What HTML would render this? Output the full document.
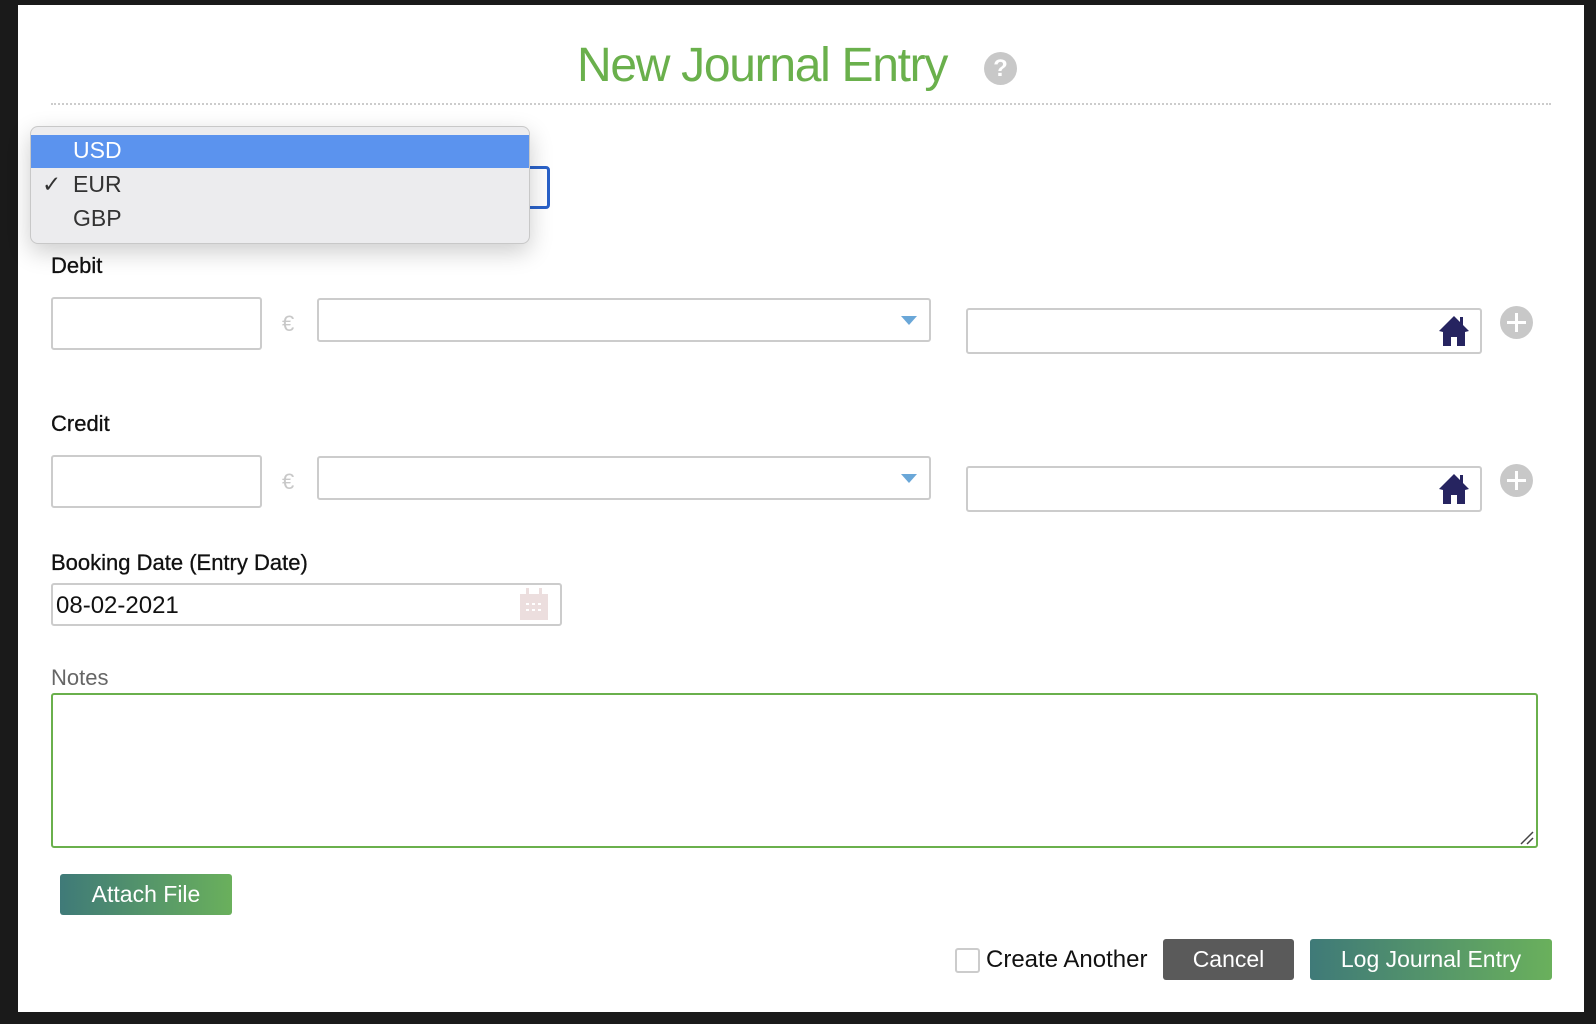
<!DOCTYPE html>
<html><head><meta charset="utf-8"><style>
*{box-sizing:border-box;margin:0;padding:0}
body{width:1596px;height:1024px;background:#1a1a1a;position:relative;overflow:hidden;font-family:"Liberation Sans",sans-serif;color:#111}
.panel{position:absolute;left:18px;top:5px;width:1566px;height:1007px;background:#fff}
.a{position:absolute}
.inp{position:absolute;border:2px solid #ccc;border-radius:3px;background:#fff}
.lbl{position:absolute;font-size:22px;color:#111;-webkit-text-stroke:0.3px #111}
.euro{position:absolute;font-size:22px;color:#c8c8c8}
.arrow{position:absolute;width:0;height:0;border-left:8px solid transparent;border-right:8px solid transparent;border-top:9px solid #6aa7d8}
.plus{position:absolute;width:33px;height:33px;border-radius:50%;background:#c8c8c8}
.plus:before{content:"";position:absolute;left:7px;top:15px;width:19px;height:3px;background:#fff}
.plus:after{content:"";position:absolute;left:15px;top:7px;width:3px;height:19px;background:#fff}
.btn{position:absolute;color:#fff;font-size:23px;text-align:center;border-radius:3px}
</style></head><body>
<div class="panel"></div>
<div class="a" style="left:577px;top:38px;font-size:48px;color:#6ab04c;letter-spacing:-1.3px">New Journal Entry</div>
<div class="a" style="left:984px;top:52px;width:33px;height:33px;border-radius:50%;background:#c8c8c8;color:#fff;font-weight:bold;font-size:24px;text-align:center;line-height:33px">?</div>
<div class="a" style="left:51px;top:103px;width:1500px;border-top:2px dotted #ccc"></div>

<div class="a" style="left:300px;top:166px;width:250px;height:43px;border:3px solid #2a62c9;border-radius:4px"></div>

<div class="lbl" style="left:51px;top:253px">Debit</div>
<div class="inp" style="left:51px;top:297px;width:211px;height:53px"></div>
<div class="euro" style="left:282px;top:311px">€</div>
<div class="inp" style="left:317px;top:298px;width:614px;height:44px"></div>
<div class="arrow" style="left:901px;top:316px"></div>
<div class="inp" style="left:966px;top:308px;width:516px;height:46px"></div>
<svg class="a" style="left:1437px;top:313px" width="34" height="34" viewBox="0 0 34 34"><path d="M17 3 L2 18 L6 19 L6 33 L14 33 L14 24 L20 24 L20 33 L28 33 L28 19 L32 18 L26 12 L26 4 L23 4 L23 9 Z" fill="#262460"/></svg>
<div class="plus" style="left:1500px;top:306px"></div>

<div class="lbl" style="left:51px;top:411px">Credit</div>
<div class="inp" style="left:51px;top:455px;width:211px;height:53px"></div>
<div class="euro" style="left:282px;top:469px">€</div>
<div class="inp" style="left:317px;top:456px;width:614px;height:44px"></div>
<div class="arrow" style="left:901px;top:474px"></div>
<div class="inp" style="left:966px;top:466px;width:516px;height:46px"></div>
<svg class="a" style="left:1437px;top:471px" width="34" height="34" viewBox="0 0 34 34"><path d="M17 3 L2 18 L6 19 L6 33 L14 33 L14 24 L20 24 L20 33 L28 33 L28 19 L32 18 L26 12 L26 4 L23 4 L23 9 Z" fill="#262460"/></svg>
<div class="plus" style="left:1500px;top:464px"></div>

<div class="lbl" style="left:51px;top:550px">Booking Date (Entry Date)</div>
<div class="inp" style="left:51px;top:583px;width:511px;height:43px"></div>
<div class="a" style="left:56px;top:592px;font-size:24px">08-02-2021</div>
<svg class="a" style="left:518px;top:586px" width="32" height="36" viewBox="0 0 32 36"><rect x="2" y="8" width="28" height="26" fill="#ecdede"/><rect x="8" y="2" width="3" height="8" fill="#ecdede"/><rect x="21" y="2" width="3" height="8" fill="#ecdede"/><g fill="#fff"><rect x="8" y="17" width="3" height="2"/><rect x="14" y="17" width="3" height="2"/><rect x="20" y="17" width="3" height="2"/><rect x="8" y="23" width="3" height="2"/><rect x="14" y="23" width="3" height="2"/><rect x="20" y="23" width="3" height="2"/></g></svg>

<div class="a" style="left:51px;top:665px;font-size:22px;color:#666">Notes</div>
<div class="a" style="left:51px;top:693px;width:1487px;height:155px;border:2px solid #6ab04c;border-radius:3px"></div>
<svg class="a" style="left:1518px;top:829px" width="16" height="16"><path d="M3 15 L15 3 M9 15 L15 9" stroke="#444" stroke-width="1.5"/></svg>

<div class="btn" style="left:60px;top:874px;width:172px;height:41px;line-height:41px;background:linear-gradient(90deg,#3f7a78,#6ab05c)">Attach File</div>

<div class="a" style="left:955px;top:948px;width:25px;height:25px;border:2px solid #ccc;border-radius:3px"></div>
<div class="a" style="left:986px;top:946px;font-size:24px">Create Another</div>
<div class="btn" style="left:1163px;top:939px;width:131px;height:41px;line-height:41px;background:#5a5a5a">Cancel</div>
<div class="btn" style="left:1310px;top:939px;width:242px;height:41px;line-height:41px;background:linear-gradient(90deg,#3f7a78,#6ab05c)">Log Journal Entry</div>

<div class="a" style="left:30px;top:126px;width:500px;height:118px;background:#ececee;border:1px solid #c8c8c8;border-radius:8px;box-shadow:0 8px 24px rgba(0,0,0,.2);overflow:hidden">
<div class="a" style="left:0;top:8px;width:500px;height:33px;background:#5b93ee"></div>
<div class="a" style="left:42px;top:10px;font-size:23px;color:#fff">USD</div>
<div class="a" style="left:11px;top:44px;font-size:23px;color:#333">✓</div>
<div class="a" style="left:42px;top:44px;font-size:23px;color:#333">EUR</div>
<div class="a" style="left:42px;top:78px;font-size:23px;color:#333">GBP</div>
</div>
</body></html>
